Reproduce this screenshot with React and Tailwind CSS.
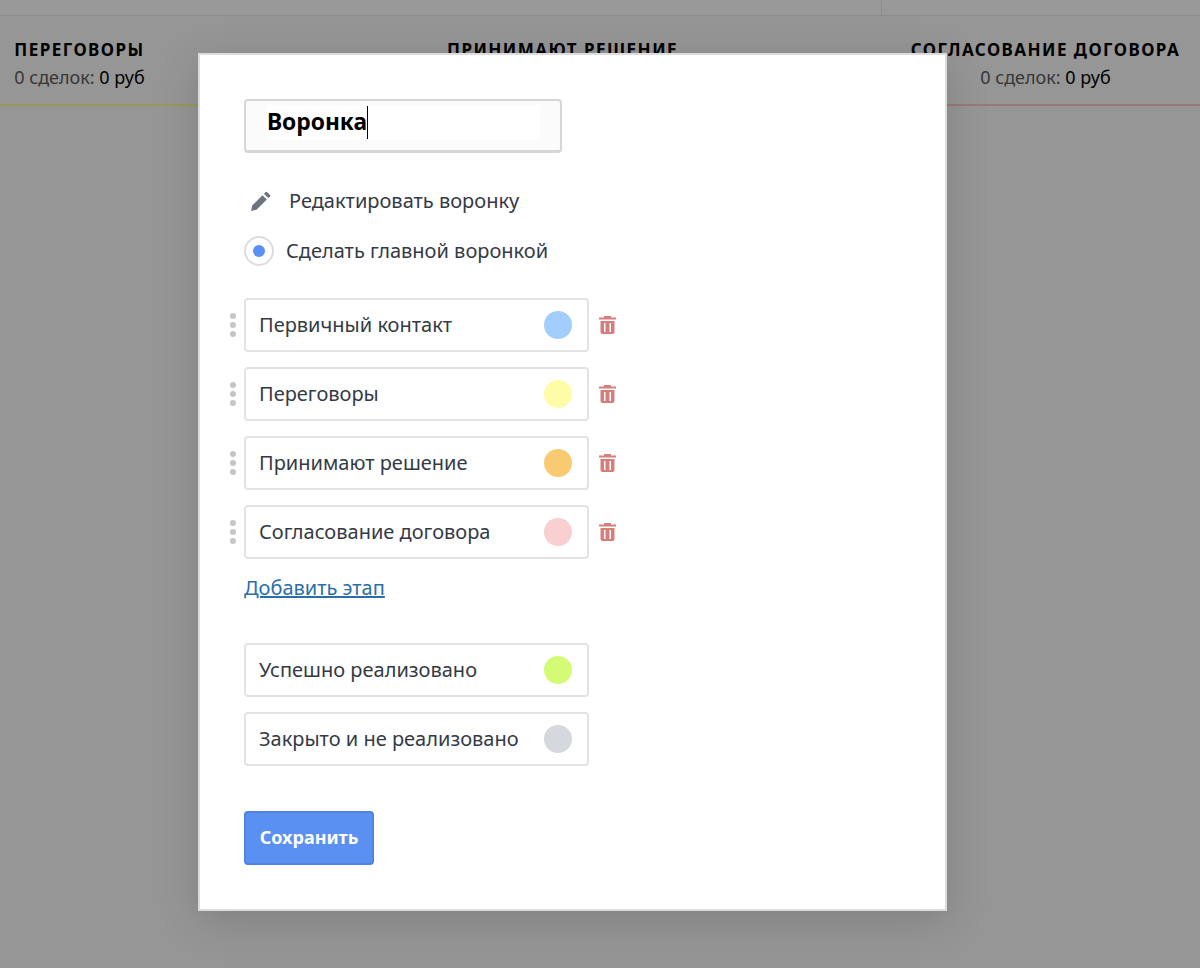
const stages = [
  { name: 'Первичный контакт', color: 'bg-[#a3cdfd]' },
  { name: 'Переговоры', color: 'bg-[#fefca6]' },
  { name: 'Принимают решение', color: 'bg-[#f8cb72]' },
  { name: 'Согласование договора', color: 'bg-[#f9cfcf]' },
];

const columns = [
  { title: 'Переговоры', line: 'border-[#ffff90]' },
  { title: 'Принимают решение', line: 'border-[#f8cb72]' },
  { title: 'Согласование договора', line: 'border-[#ffc8c8]' },
];

function PencilIcon() {
  return (
    <svg viewBox="0 0 20 20" className="w-[20px] h-[20px] ml-[7px] mr-[3px] fill-[#6b7280]">
      <path d="M0 20 L1.3 14.5 L11.5 4.2 L15.8 8.5 L5.5 18.7 Z" />
      <path d="M13 2.7 L14.6 1 Q15.2 0.4 15.9 1 L19.2 4.2 Q19.8 4.9 19.2 5.5 L17.3 7 Z" />
    </svg>
  );
}

function TrashIcon() {
  return (
    <svg viewBox="0 0 17 18" className="w-[17px] h-[18px] ml-[10px] fill-[#d67f7a]">
      <path d="M5 0 H12 V1.5 H17 V3.5 H0 V1.5 H5 Z" />
      <path
        fillRule="evenodd"
        d="M1.5 5 H15.5 V16 Q15.5 18 13.5 18 H3.5 Q1.5 18 1.5 16 Z M5 7 V16 H6.5 V7 Z M10.5 7 V16 H12 V7 Z"
      />
    </svg>
  );
}

function StageBox({ name, color }) {
  return (
    <div className="w-[345px] h-[54px] flex items-center justify-between pl-[13px] pr-[15px] border-2 border-[#e2e3e5] rounded-[4px] text-[20px] text-[#343a45]">
      <span>{name}</span>
      <span className={`w-[28px] h-[28px] rounded-full ${color}`}></span>
    </div>
  );
}

export default function App() {
  return (
    <div className="relative h-[968px] overflow-hidden bg-[#fafafa] font-['Noto_Sans',sans-serif]">
      {/* шапка за модалкой */}
      <div className="h-[16px] flex border-b border-[#e8e8e8] bg-white">
        <div className="w-[882px] border-r border-[#e8e8e8]"></div>
      </div>
      <div className="flex -ml-[162px] w-[1449px]">
        {columns.map((col) => (
          <div key={col.title} className={`w-[483px] h-[90px] pt-[22px] text-center border-b-2 ${col.line}`}>
            <div className="text-[17px] leading-[24px] font-bold uppercase tracking-[1.45px] text-black">{col.title}</div>
            <div className="text-[18px] leading-[26px] mt-[2px] text-[#5c5c5c]">
              0 сделок: <span className="text-black">0 руб</span>
            </div>
          </div>
        ))}
      </div>

      {/* затемнение и модалка */}
      <div className="absolute inset-0 bg-black/40">
        <div className="ml-[198px] mt-[53px] w-[749px] h-[858px] bg-white border-2 border-[#dcdcdc] shadow-[0_10px_40px_rgba(0,0,0,0.15)] pl-[44px] pt-[44px]">
          <div className="w-[318px] h-[54px] pl-[21px] pt-[4px] rounded-[4px] border-2 border-b-[3px] border-[#d6d6d6] bg-[#fbfbfb]">
            <div className="w-[273px] h-[35px] flex items-center bg-white">
              <span className="text-[22.8px] font-bold text-black">Воронка</span>
              <span className="w-[1px] h-[33px] bg-black"></span>
            </div>
          </div>

          <div className="flex items-center mt-[32px] h-[32px] text-[20px] text-[#343a45]">
            <PencilIcon />
            <span className="ml-[15px]">Редактировать воронку</span>
          </div>

          <div className="flex items-center mt-[18px] h-[32px] text-[20px] text-[#343a45]">
            <span className="w-[30px] h-[30px] flex items-center justify-center rounded-full border-2 border-[#dcdde0]">
              <span className="w-[12px] h-[12px] rounded-full bg-[#5990f2]"></span>
            </span>
            <span className="ml-[12px]">Сделать главной воронкой</span>
          </div>

          <div className="mt-[31px] -ml-[18px] flex flex-col gap-[15px]">
            {stages.map((s) => (
              <div key={s.name} className="flex items-center">
                <div className="w-[18px] pl-[4px] flex flex-col gap-[3px]">
                  <span className="w-[6px] h-[6px] rounded-full bg-[#c4c5c8]"></span>
                  <span className="w-[6px] h-[6px] rounded-full bg-[#c4c5c8]"></span>
                  <span className="w-[6px] h-[6px] rounded-full bg-[#c4c5c8]"></span>
                </div>
                <StageBox name={s.name} color={s.color} />
                <TrashIcon />
              </div>
            ))}
          </div>

          <a className="block mt-[15px] text-[20px] leading-[28px] text-[#2a6fa8] underline">Добавить этап</a>

          <div className="mt-[41px] flex flex-col gap-[15px]">
            <StageBox name="Успешно реализовано" color="bg-[#d3fb76]" />
            <StageBox name="Закрыто и не реализовано" color="bg-[#d5d9dd]" />
          </div>

          <button className="mt-[45px] w-[130px] h-[54px] pb-[2px] rounded-[4px] border-2 border-[#4f84e0] bg-[#5990f2] text-white text-[18px] font-bold">
            Сохранить
          </button>
        </div>
      </div>
    </div>
  );
}
